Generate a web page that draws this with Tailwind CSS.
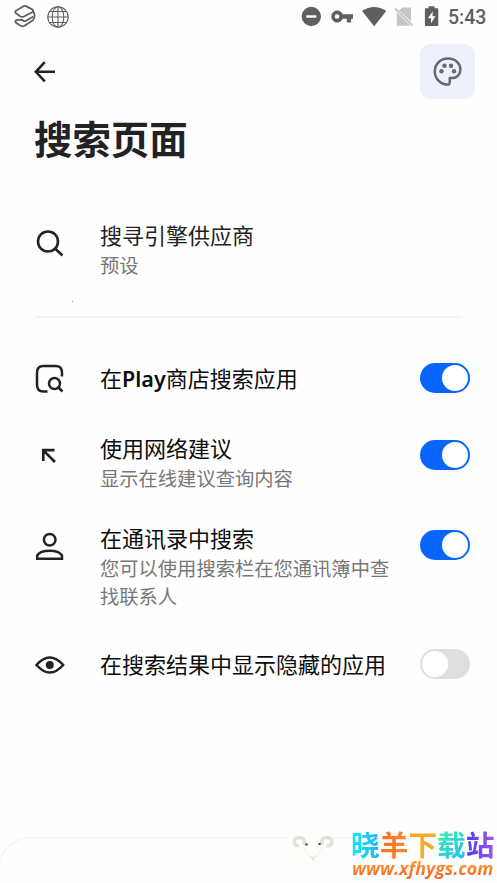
<!DOCTYPE html>
<html lang="zh-CN">
<head>
<meta charset="utf-8">
<title>搜索页面</title>
<script src="https://cdn.jsdelivr.net/npm/@tailwindcss/browser@4"></script>
</head>
<body class="relative h-[883px] w-[497px] overflow-hidden bg-[#fefefe] font-['Noto_Sans_CJK_SC',sans-serif] text-[#0c0c0c]">

<header class="flex h-[34px] items-center justify-between pl-[14px] pr-[11px] text-[#5f5f5f]">
  <div class="flex items-center gap-[10px]">
    <svg class="h-[24px] w-[23px]" viewBox="0 0 23 24" fill="none" stroke="currentColor" stroke-width="1.800" stroke-linejoin="round" stroke-linecap="round"><path d="M9.500 1.300Q11 .4 12.500 1.400L18.500 4.600Q19.800 6 18.500 7L10.500 11.300Q8.500 12.300 6.500 11.500L2 8.300Q.5 6.800 2 5.700ZM19 6.500Q20.800 8 20.500 11.500Q20.300 14.200 18.500 15.500L10.500 20.800Q8.500 22 6.500 20.800L2 17.800Q.6 16 2.500 15.200L8 14.600L9.600 16Q11 16.600 12.500 15.500L18.500 12"/></svg>
    <svg class="size-[22px]" viewBox="0 0 22 22" fill="none" stroke="currentColor" stroke-width="1.100"><circle cx="11" cy="11" r="10.200"/><ellipse cx="11" cy="11" rx="5.800" ry="10.200"/><path d="M11 .8V21.200M.8 11H21.200M2.500 5.500H19.500M2.500 16.500H19.500"/></svg>
  </div>
  <div class="flex items-center">
    <svg class="h-[22px] w-[140px]" viewBox="301 6 140 22" fill="currentColor">
      <path fill-rule="evenodd" d="M311.300 6.800a9.700 9.700 0 1 0 0 19.400a9.700 9.700 0 1 0 0-19.400ZM306.300 15.300h10v2.400h-10Z"/>
      <path fill-rule="evenodd" d="M342.800 14.300H353v4.500h-1.900v3.800h-4.300v-3.800h-4a6 6 0 1 1 0-4.500ZM337 14.200a2.300 2.300 0 1 0 .01 4.600a2.300 2.300 0 0 0-.01-4.600Z"/>
      <path d="M362 11Q374.200 2.800 386.300 11L374.200 26.300Z"/>
      <path fill="#c6c6c6" d="M402.500 7.500H411V21.500L398.800 10.300ZM396.800 12.500 410.500 25.800H396.800Z"/><path stroke="#c6c6c6" stroke-width="2" d="M395 8.500 412.500 25.500"/>
      <path fill-rule="evenodd" d="M428.500 6.300h6v2h3q.8 0 .8.8v16.200q0 .8-.8.800h-11.800q-.8 0-.8-.8V9.100q0-.8.800-.8h2.800ZM432.800 11.200 428 18.200h3v5l4.500-7h-3Z"/>
    </svg>
    <span class="ml-[7px] w-[38px] whitespace-nowrap pt-[2px] font-[Roboto] text-[19.500px] font-medium leading-[22px]">5:43</span>
  </div>
</header>

<main class="flex flex-col">
  <div class="flex h-[66px] items-start justify-between pl-[34px] pr-[22px] pt-[10px]">
    <svg class="mt-[17px] size-[22px]" viewBox="0 0 22 22" fill="none" stroke="#222" stroke-width="2.500"><path d="M21 10.800H2M10.800 1.200 1.800 10.800 10.800 20.400"/></svg>
    <div class="flex size-[55px] items-center justify-center rounded-[11px] bg-[#eef1f9]">
      <svg class="size-[29px]" viewBox="0 0 29 29" fill="none" stroke="#666971" stroke-width="2.500" stroke-linejoin="round"><path d="M16 27.500C8 28 1.800 22 1.800 14.500C1.800 7 7.500 1.600 15 1.600C22.500 1.600 27.400 6.500 27.400 12.500C27.400 17.500 24 21 19.500 21H16.800V24.500Q16.800 26 16 27.500Z"/><g fill="#666971" stroke="none"><circle cx="8.500" cy="14.200" r="2.200"/><circle cx="11.500" cy="8.800" r="2.200"/><circle cx="18" cy="8.800" r="2.200"/><circle cx="21" cy="14.200" r="2.200"/></g></svg>
    </div>
  </div>

  <h1 class="h-[117px] pl-[34px] pt-[10px] text-[38.400px] font-bold leading-[55px] text-[#222]">搜索页面</h1>

  <section class="mx-[35px] flex h-[101px] border-b-[2px] border-[#f5f5f5]">
    <svg class="ml-[1px] mt-[13px] size-[28px]" viewBox="0 0 28 28" fill="none" stroke="#222" stroke-width="2.600"><circle cx="12" cy="11.500" r="10"/><path d="m19 18.500 7.500 7"/></svg>
    <div class="ml-[36px]">
      <h2 class="mt-px text-[22px] leading-[32px] text-[#222]">搜寻引擎供应商</h2>
      <p class="mt-[2px] text-[19.300px] leading-[27px] text-[#777]">预设</p>
    </div>
  </section>

  <section class="flex h-[107px] pl-[35px] pr-[27px] pt-[43px]">
    <svg class="mt-[3px] size-[30px]" viewBox="0 0 30 30" fill="none" stroke="#222" stroke-width="2.500"><path d="M12.500 27.500H8.500Q2 27.500 2 21V8.500Q2 2 8.500 2H20.500Q27 2 27 8.500V12.500"/><circle cx="19.500" cy="19.500" r="5.500"/><path d="m23.500 23.500 4 4"/></svg>
    <h2 class="ml-[35px] whitespace-nowrap text-[22px] leading-[32px]">在<span class="font-['Noto_Sans'] text-[21.500px] font-semibold">Play</span>商店搜索应用</h2>
    <div class="ml-auto mt-[2px] flex h-[30px] w-[50px] justify-end rounded-full bg-[#0866ff] p-[2px]"><span class="size-[26px] rounded-full bg-white"></span></div>
  </section>

  <section class="flex h-[90px] pl-[35px] pr-[27px] pt-[6px]">
    <svg class="ml-[6px] mt-[17px] size-[15px]" viewBox="0 0 15 15" fill="none" stroke="#222" stroke-width="2.700"><path d="M2.300 13V2.200H13.500M2.600 2.600 14 14"/></svg>
    <div class="ml-[44px]">
      <h2 class="text-[22px] leading-[32px]">使用网络建议</h2>
      <p class="mt-px text-[19.300px] leading-[28px] text-[#777]">显示在线建议查询内容</p>
    </div>
    <div class="ml-auto mt-[9px] flex h-[30px] w-[50px] justify-end rounded-full bg-[#0866ff] p-[2px]"><span class="size-[26px] rounded-full bg-white"></span></div>
  </section>

  <section class="flex h-[126px] pl-[35px] pr-[27px] pt-[6px]">
    <svg class="mt-[11px] size-[29px]" viewBox="0 0 29 29" fill="none" stroke="#222" stroke-width="2.500"><circle cx="14.700" cy="7.800" r="5.800"/><path d="M2.200 26.800V23.500C6 17.200 23 17.200 27 23.500V26.800Z"/></svg>
    <div class="ml-[36px]">
      <h2 class="text-[22px] leading-[32px]">在通讯录中搜索</h2>
      <p class="mt-px w-[295px] text-[19.300px] leading-[28px] text-[#777]">您可以使用搜索栏在您通讯簿中查找联系人</p>
    </div>
    <div class="ml-auto mt-[9px] flex h-[30px] w-[50px] justify-end rounded-full bg-[#0866ff] p-[2px]"><span class="size-[26px] rounded-full bg-white"></span></div>
  </section>

  <section class="flex h-[50px] pl-[35px] pr-[27px] pt-[6px]">
    <svg class="mt-[9px] h-[18px] w-[30px]" viewBox="0 0 30 18" fill="none" stroke="#222" stroke-width="2.500"><path d="M1.500 9Q14.800-6 28.200 9Q14.800 24 1.500 9Z"/><circle cx="14.800" cy="9" r="4" fill="#222" stroke="none"/></svg>
    <h2 class="ml-[35px] whitespace-nowrap text-[22px] leading-[32px]">在搜索结果中显示隐藏的应用</h2>
    <div class="ml-auto mt-[2px] flex h-[30px] w-[50px] rounded-full bg-[#dfdfdf] p-[2px]"><span class="size-[26px] rounded-full bg-white"></span></div>
  </section>
</main>

<span class="absolute left-[72px] top-[301px] size-px bg-[#999]"></span>

<div class="absolute left-[-2px] top-[837px] h-[60px] w-[510px] rounded-t-[32px] border-2 border-[#f7f7f7]"></div>

<footer class="absolute left-[288px] top-[819px] flex">
  <div class="h-[60px] w-[45px] bg-[#fdfdfb]">
    <svg class="h-[60px] w-[54px]" viewBox="288 819 54 60" fill="none">
      <path stroke="#e2e0d7" stroke-width="3.500" d="M304 845Q306 837.500 299 837.500Q293 838.500 294.500 843.500Q296 847 299 845M322 845Q320 837.500 327 837.500Q333 838.500 331.500 843.500Q330 847 327 845"/>
      <path stroke="#f0f0ec" d="M303 847 309.500 857Q312.500 862 316 857L322.500 847"/>
      <path stroke="#deded9" d="m310 856 3 2 3-2M313 858v3"/>
      <circle cx="306.500" cy="844.500" r="1.300" fill="#555"/><circle cx="319.500" cy="844" r="1.300" fill="#555"/>
    </svg>
  </div>
  <div class="ml-[18px] mt-[10px] w-[146px]">
    <div class="flex h-[30px] whitespace-nowrap text-[28.700px] font-bold leading-[30px]">
      <span class="bg-linear-to-r from-[#00f0f0] to-[#28aef5] bg-clip-text text-transparent">晓</span><span class="bg-linear-to-r from-[#ff6a24] to-[#f78a2c] bg-clip-text text-transparent">羊</span><span class="bg-linear-to-r from-[#ff9f22] to-[#e8b42c] bg-clip-text text-transparent">下</span><span class="bg-linear-to-br from-[#48f09a] to-[#20bdf7] bg-clip-text text-transparent">载</span><span class="bg-linear-to-r from-[#4b3dea] to-[#9b52ff] bg-clip-text text-transparent">站</span>
    </div>
    <div class="bg-linear-to-b from-[#ffa02b] to-[#f15a29] bg-clip-text pb-[3px] pl-[1px] font-['Open_Sans'] text-[17.800px] font-bold italic leading-[18px] text-transparent">www.xfhygs.com</div>
  </div>
</footer>
</body>
</html>
